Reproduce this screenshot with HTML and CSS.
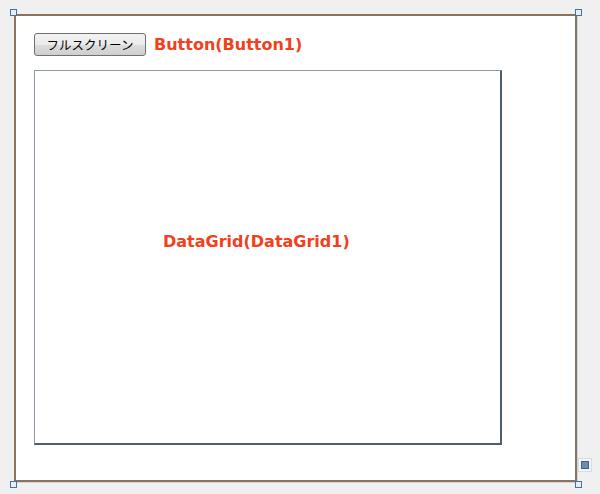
FILE: index.html
```html
<!DOCTYPE html>
<html>
<head>
<meta charset="utf-8">
<link rel="stylesheet" href="styles.css">
</head>
<body>
<div class="stage">
  <div class="frame">
    <div class="toolbar">
      <button class="btn">フルスクリーン</button>
      <span class="label">Button(Button1)</span>
    </div>
    <div class="grid">
      <span class="label grid-label">DataGrid(DataGrid1)</span>
    </div>
  </div>
  <span class="handle h-tl"></span>
  <span class="handle h-tr"></span>
  <span class="handle h-bl"></span>
  <span class="handle h-br"></span>
  <span class="grip"><span class="grip-inner"></span></span>
</div>
</body>
</html>
```
FILE: styles.css
```css
html, body {
  margin: 0;
  padding: 0;
  background: #f0f0f0;
  width: 600px;
  height: 494px;
  overflow: hidden;
}
.stage {
  position: relative;
  width: 600px;
  height: 494px;
  padding: 14px 0 0 14px;
  box-sizing: border-box;
}
.frame {
  width: 563px;
  height: 468px;
  box-sizing: border-box;
  background: #fff;
  border: 2px solid #8c7458;
  box-shadow: 1px 1px 0 #c9d6e6;
  padding: 17px 0 0 18px;
  display: flex;
  flex-direction: column;
  gap: 14px;
}
.toolbar {
  display: flex;
  align-items: center;
  gap: 8px;
  height: 23px;
}
.btn {
  width: 112px;
  height: 23px;
  margin: 0;
  padding: 0;
  border: 1px solid #707070;
  border-radius: 3px;
  background: linear-gradient(#f2f2f2 0%, #ebebeb 50%, #dddddd 51%, #cfcfcf 100%);
  font-family: "Noto Sans CJK JP", sans-serif;
  font-size: 12.5px;
  color: #000;
  line-height: 21px;
}
.label {
  font-family: "DejaVu Sans", Verdana, sans-serif;
  font-weight: bold;
  font-size: 16px;
  color: #f2401c;
}
.grid {
  width: 468px;
  height: 375px;
  box-sizing: border-box;
  border-style: solid;
  border-width: 1px 2px 2px 1px;
  border-color: #8e9aa6 #4f5e6e #4f5e6e #8e9aa6;
  padding: 161px 0 0 128px;
}
.grid-label {
  display: block;
}
.handle {
  position: absolute;
  width: 5px;
  height: 5px;
  border: 1px solid #4a6fa0;
  background: #e8eef6;
}
.h-tl { left: 10px; top: 9px; }
.h-tr { left: 575px; top: 9px; }
.h-bl { left: 10px; top: 481px; }
.h-br { left: 575px; top: 481px; }
.grip {
  position: absolute;
  left: 578px;
  top: 458px;
  width: 14px;
  height: 14px;
  box-sizing: border-box;
  border: 1px solid #d4dce6;
  background: #f4f6f8;
  display: flex;
  align-items: center;
  justify-content: center;
}
.grip-inner {
  width: 8px;
  height: 8px;
  box-sizing: border-box;
  border: 1px solid #3d5f8c;
  background: #6f8db3;
}
```
